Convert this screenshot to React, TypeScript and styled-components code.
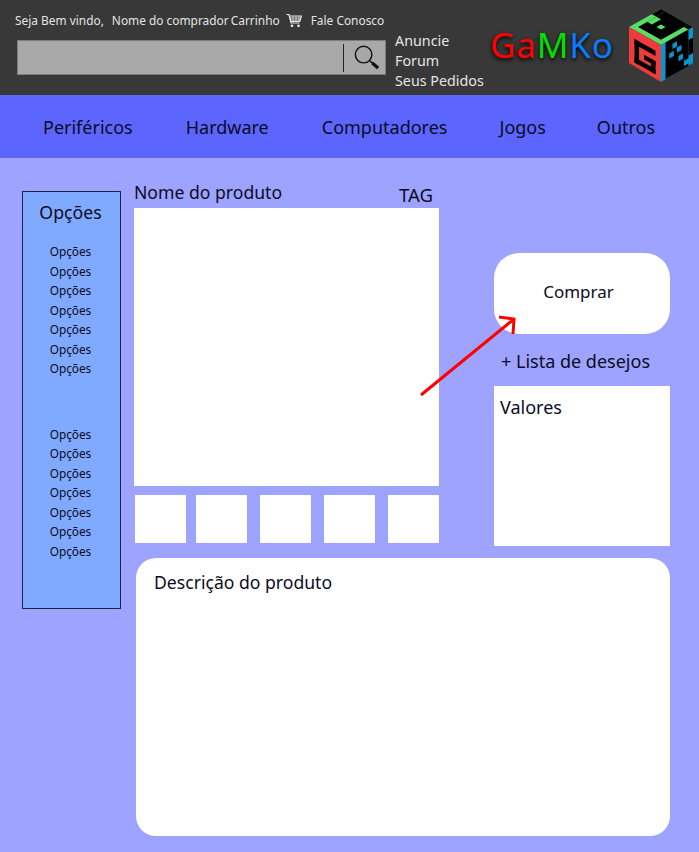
import * as React from "react";
import styled, { createGlobalStyle } from "styled-components";

const GlobalStyle = createGlobalStyle`
  html, body {
    margin: 0;
    padding: 0;
    background: #9da3ff;
  }
  * {
    box-sizing: border-box;
  }
`;

const Page = styled.div`
  position: relative;
  width: 699px;
  height: 852px;
  overflow: hidden;
  background: #9da3ff;
  color: #0c0c1e;
  font-family: "Noto Sans", "Liberation Sans", sans-serif;
`;

const Header = styled.header`
  display: flex;
  height: 95px;
  padding-left: 15px;
  background: #383838;
  color: #e4e4e4;
`;

const HeaderLeft = styled.div`
  display: flex;
  flex-direction: column;
  width: 371px;
`;

const TopRow = styled.div`
  display: flex;
  align-items: center;
  height: 14px;
  margin-top: 13px;
  font-size: 11.9px;
  white-space: nowrap;
`;

const TopText = styled.span<{ $gap?: number }>`
  margin-left: ${(p) => p.$gap ?? 0}px;
`;

const CartSvg = styled.svg`
  flex: none;
  width: 16px;
  height: 15px;
  margin-left: 6px;
`;

const SearchBox = styled.div`
  display: flex;
  align-items: center;
  justify-content: flex-end;
  width: 369px;
  height: 35px;
  margin: 13px 0 0 2px;
  background: #a8a8a8;
  border: 1px solid #7d7d7d;
`;

const SearchDivider = styled.div`
  width: 1px;
  height: 28px;
  background: #222;
`;

const SearchIcon = styled.svg`
  width: 27px;
  height: 27px;
  margin: 0 5px 0 9px;
`;

const HeaderLinks = styled.div`
  display: flex;
  flex-direction: column;
  width: 96px;
  margin-left: 9px;
  padding-top: 31px;
  font-size: 14.3px;
  line-height: 20px;
  white-space: nowrap;
`;

const Logo = styled.div`
  align-self: center;
  width: 138px;
  margin-top: -5px;
  margin-left: -1px;
  font-size: 35px;
  line-height: 40px;
  letter-spacing: 0.8px;
  white-space: nowrap;
  text-shadow: 0 2px 4px #000;
`;

const LogoPart = styled.span<{ $color: string }>`
  color: ${(p) => p.$color};
`;

const Cube = styled.svg`
  flex: none;
  width: 64px;
  height: 73px;
  margin-top: 9px;
  margin-left: 1px;
`;

const Nav = styled.nav`
  display: flex;
  align-items: center;
  height: 63px;
  padding-left: 43px;
  background: #5c66ff;
  font-size: 18px;
`;

const NavItem = styled.span<{ $gap?: number }>`
  margin-left: ${(p) => p.$gap ?? 0}px;
`;

const Content = styled.main`
  display: flex;
  align-items: flex-start;
  padding: 24px 0 0 22px;
`;

const Sidebar = styled.aside`
  display: flex;
  flex-direction: column;
  align-items: center;
  width: 99px;
  height: 418px;
  margin-top: 9px;
  padding: 8px 2px 0 0;
  background: #80aaff;
  border: 1px solid #1d2340;
`;

const SidebarTitle = styled.div`
  height: 42px;
  font-size: 17.7px;
  line-height: 24px;
`;

const SidebarGroup = styled.div<{ $gap?: number }>`
  display: flex;
  flex-direction: column;
  align-items: center;
  margin-top: ${(p) => p.$gap ?? 0}px;
  font-size: 11.8px;
  line-height: 19.5px;
`;

const MainColumn = styled.div`
  display: flex;
  flex-direction: column;
  margin-left: 13px;
`;

const ProductRow = styled.div`
  display: flex;
`;

const Gallery = styled.section`
  display: flex;
  flex-direction: column;
  width: 305px;
`;

const TitleRow = styled.div`
  display: flex;
  justify-content: space-between;
  height: 26px;
  padding-right: 6px;
  font-size: 17.6px;
  line-height: 20px;
`;

const Tag = styled.span`
  padding-top: 3px;
  font-size: 18.6px;
`;

const MainImage = styled.div`
  height: 278px;
  background: #fff;
`;

const Thumbs = styled.div`
  display: flex;
  margin-top: 9px;
  padding-left: 1px;
`;

const Thumb = styled.div<{ $gap?: number }>`
  width: 51.3px;
  height: 48px;
  margin-left: ${(p) => p.$gap ?? 0}px;
  background: #fff;
`;

const BuyColumn = styled.section`
  display: flex;
  flex-direction: column;
  width: 176px;
  margin-left: 55px;
  padding-top: 71px;
`;

const BuyButton = styled.div`
  display: flex;
  align-items: center;
  justify-content: center;
  height: 81px;
  padding: 0 7px 5px 0;
  background: #fff;
  border-radius: 25px;
  font-size: 17px;
`;

const WishList = styled.div`
  height: 52px;
  padding: 15px 0 0 7px;
  font-size: 18px;
  line-height: 24px;
  white-space: nowrap;
`;

const Prices = styled.div`
  height: 160px;
  padding: 9px 6px;
  background: #fff;
  font-size: 18px;
  line-height: 24px;
`;

const Description = styled.section`
  width: 534px;
  height: 278px;
  margin: 12px 0 0 2px;
  padding: 12px 18px;
  background: #fff;
  border-radius: 20px;
  font-size: 17.6px;
  line-height: 24px;
`;

const Arrow = styled.svg`
  position: absolute;
  left: 410px;
  top: 305px;
  width: 115px;
  height: 100px;
`;

const G_CELLS = [
  [1.2, 1.7, 4.6, 1],
  [1.2, 1.7, 1, 4.5],
  [1.2, 5.2, 4.6, 1],
  [4.8, 3.7, 1, 2.5],
  [3.3, 3.7, 2.5, 0.9],
];

const RIGHT_BLACK = [
  [1, 0, 5, 7],
  [6, 2, 1, 3],
];

const RIGHT_BLUE = [
  [2.5, 1, 1, 1],
  [1.8, 2.5, 1, 1],
  [3.5, 2.2, 1, 1],
  [3.8, 4, 1, 1],
  [5, 5.5, 2, 1],
];

const TOP_BLACK = [
  [1, 1, 6, 5],
  [5, 0, 2, 1],
  [6, 6, 1, 1],
];

const TOP_GREEN = [
  [3, 3, 1, 1],
  [3, 1, 2, 1],
];

const options = ["Opções", "Opções", "Opções", "Opções", "Opções", "Opções", "Opções"];

const renderCells = (cells: number[][], fill: string) =>
  cells.map(([x, y, w, h], i) => <rect key={i} x={x} y={y} width={w} height={h} fill={fill} />);

export default function App() {
  return (
    <Page>
      <GlobalStyle />
      <Header>
        <HeaderLeft>
          <TopRow>
            <TopText>Seja Bem vindo,</TopText>
            <TopText $gap={8}>Nome do comprador</TopText>
            <TopText $gap={2}>Carrinho</TopText>
            <CartSvg viewBox="0 0 16 15">
              <path d="M0.5 1.5H3L5 10H13.5" fill="none" stroke="#e4e4e4" strokeWidth="1.2" />
              <path d="M3.5 3H15.5L13.8 8.5H4.8Z" fill="none" stroke="#e4e4e4" strokeWidth="1.1" />
              <path d="M3.8 5H15M4.3 7H14.3M7 3V8.5M10 3V8.5M13 3V8.5" stroke="#e4e4e4" strokeWidth="0.8" />
              <circle cx="6" cy="12.8" r="1.4" fill="#e4e4e4" />
              <circle cx="12.5" cy="12.8" r="1.4" fill="#e4e4e4" />
            </CartSvg>
            <TopText $gap={9}>Fale Conosco</TopText>
          </TopRow>
          <SearchBox>
            <SearchDivider />
            <SearchIcon viewBox="0 0 28 28">
              <circle cx="11" cy="11" r="8.6" fill="none" stroke="#111" strokeWidth="1.5" />
              <path d="M17.5 17.5L26 25" stroke="#111" strokeWidth="1.6" />
              <path d="M20 19.8L26 25" stroke="#111" strokeWidth="3.4" />
            </SearchIcon>
          </SearchBox>
        </HeaderLeft>
        <HeaderLinks>
          <span>Anuncie</span>
          <span>Forum</span>
          <span>Seus Pedidos</span>
        </HeaderLinks>
        <Logo>
          <LogoPart $color="#ff0000">Ga</LogoPart>
          <LogoPart $color="#00e000">M</LogoPart>
          <LogoPart $color="#0a7cff">Ko</LogoPart>
        </Logo>
        <Cube viewBox="0 0 64 73">
          <polygon points="32,0 64,18 32,36 0,18" fill="#5bdc64" />
          <polygon points="0,18 32,36 32,73 0,54" fill="#ee3c3c" />
          <polygon points="32,36 64,18 64,54 32,73" fill="#0a96cc" />
          <g transform="matrix(4.571 2.571 0 5.214 0 18)">{renderCells(G_CELLS, "#000")}</g>
          <g transform="matrix(4.571 -2.571 0 5.214 32 36)">
            {renderCells(RIGHT_BLACK, "#000")}
            {renderCells(RIGHT_BLUE, "#0a96cc")}
          </g>
          <g transform="matrix(4.571 -2.571 4.571 2.571 0 18)">
            {renderCells(TOP_BLACK, "#000")}
            {renderCells(TOP_GREEN, "#5bdc64")}
          </g>
        </Cube>
      </Header>
      <Nav>
        <NavItem>Periféricos</NavItem>
        <NavItem $gap={53}>Hardware</NavItem>
        <NavItem $gap={53}>Computadores</NavItem>
        <NavItem $gap={52}>Jogos</NavItem>
        <NavItem $gap={51}>Outros</NavItem>
      </Nav>
      <Content>
        <Sidebar>
          <SidebarTitle>Opções</SidebarTitle>
          <SidebarGroup>
            {options.map((o, i) => (
              <span key={i}>{o}</span>
            ))}
          </SidebarGroup>
          <SidebarGroup $gap={46}>
            {options.map((o, i) => (
              <span key={i}>{o}</span>
            ))}
          </SidebarGroup>
        </Sidebar>
        <MainColumn>
          <ProductRow>
            <Gallery>
              <TitleRow>
                <span>Nome do produto</span>
                <Tag>TAG</Tag>
              </TitleRow>
              <MainImage />
              <Thumbs>
                <Thumb />
                <Thumb $gap={9.8} />
                <Thumb $gap={12.9} />
                <Thumb $gap={12.3} />
                <Thumb $gap={13} />
              </Thumbs>
            </Gallery>
            <BuyColumn>
              <BuyButton>Comprar</BuyButton>
              <WishList>+ Lista de desejos</WishList>
              <Prices>Valores</Prices>
            </BuyColumn>
          </ProductRow>
          <Description>Descrição do produto</Description>
        </MainColumn>
      </Content>
      <Arrow viewBox="0 0 115 100">
        <path d="M11 90L104 14M89 12L104 14L103 29" fill="none" stroke="#ff0000" strokeWidth="3" />
      </Arrow>
    </Page>
  );
}
